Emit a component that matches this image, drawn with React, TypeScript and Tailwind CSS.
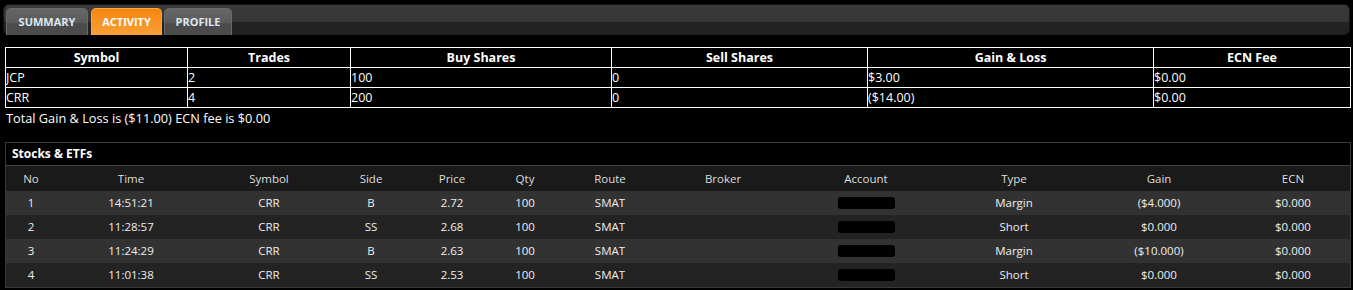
const summary = [
  { symbol: "JCP", trades: "2", buy: "100", sell: "0", gain: "$3.00", ecn: "$0.00" },
  { symbol: "CRR", trades: "4", buy: "200", sell: "0", gain: "($14.00)", ecn: "$0.00" },
];

const trades = [
  { no: "1", time: "14:51:21", symbol: "CRR", side: "B", price: "2.72", qty: "100", route: "SMAT", type: "Margin", gain: "($4.000)", ecn: "$0.000" },
  { no: "2", time: "11:28:57", symbol: "CRR", side: "SS", price: "2.68", qty: "100", route: "SMAT", type: "Short", gain: "$0.000", ecn: "$0.000" },
  { no: "3", time: "11:24:29", symbol: "CRR", side: "B", price: "2.63", qty: "100", route: "SMAT", type: "Margin", gain: "($10.000)", ecn: "$0.000" },
  { no: "4", time: "11:01:38", symbol: "CRR", side: "SS", price: "2.53", qty: "100", route: "SMAT", type: "Short", gain: "$0.000", ecn: "$0.000" },
];

const cols = "grid grid-cols-[50px_150px_126px_78px_84px_62px_108px_118px_168px_128px_162px_106px]";

const Tab = ({ label, active }: { label: string; active?: boolean }) => (
  <div
    className={
      active
        ? "h-[27px] px-[12px] flex items-center justify-center rounded-t-[5px] bg-gradient-to-b from-[#f5850a] to-[#f8a035] text-white text-[11px] font-bold border border-b-0 border-[#f9a845]"
        : "h-[27px] px-[12px] flex items-center justify-center rounded-t-[5px] bg-[linear-gradient(#666_0%,#5a5a5a_55%,#4a4a4a_56%,#4d4d4d_100%)] text-[#dce7ef] text-[11px] font-bold border border-b-0 border-[#6a6a6a]"
    }
  >
    {label}
  </div>
);

export default function App() {
  return (
    <div className="w-[1353px] h-[290px] overflow-hidden bg-black text-white font-['Open_Sans',sans-serif] pt-[4px]">
      <div className="mx-[3px] h-[31px] rounded-[6px] border border-b-0 border-[#151515] bg-[linear-gradient(#3a3a3a_0%,#353535_55%,#222_56%,#202020_100%)] flex items-end gap-[2px] pl-[2px]">
        <div className="w-[82px]"><Tab label="SUMMARY" /></div>
        <div className="w-[71px] ml-[1px]"><Tab label="ACTIVITY" active /></div>
        <div className="w-[68px]"><Tab label="PROFILE" /></div>
      </div>

      <table className="mt-[12px] ml-[5px] w-[1346px] table-fixed border-collapse text-[12.5px]">
        <colgroup>
          <col className="w-[182px]" />
          <col className="w-[163px]" />
          <col className="w-[261px]" />
          <col className="w-[256px]" />
          <col className="w-[286px]" />
          <col />
        </colgroup>
        <thead>
          <tr>
            {["Symbol", "Trades", "Buy Shares", "Sell Shares", "Gain & Loss", "ECN Fee"].map((h) => (
              <th key={h} className="border border-white h-[20px] p-0 leading-[18px] font-bold text-center">
                {h}
              </th>
            ))}
          </tr>
        </thead>
        <tbody>
          {summary.map((r) => (
            <tr key={r.symbol}>
              {[r.symbol, r.trades, r.buy, r.sell, r.gain, r.ecn].map((v, i) => (
                <td key={i} className="border border-white h-[20px] p-0 leading-[18px] text-left">
                  {v}
                </td>
              ))}
            </tr>
          ))}
        </tbody>
      </table>

      <div className="ml-[6px] mt-[1px] text-[12.75px] leading-[18px]">Total Gain &amp; Loss is ($11.00) ECN fee is $0.00</div>

      <div className="mt-[15px] ml-[5px] w-[1346px] border border-[#383838] text-[11.5px]">
        <div className="h-[23px] flex items-center px-[6px] font-bold text-[12px] border-b border-[#444] bg-black">
          Stocks &amp; ETFs
        </div>
        <div className={`${cols} h-[25px] items-center bg-[#1a1a1a] text-[#dedede] text-center`}>
          {["No", "Time", "Symbol", "Side", "Price", "Qty", "Route", "Broker", "Account", "Type", "Gain", "ECN"].map((h) => (
            <div key={h}>{h}</div>
          ))}
        </div>
        {trades.map((t, i) => (
          <div
            key={t.no}
            className={`${cols} h-[24px] items-center text-center text-[#eeeeee] font-medium ${i % 2 === 0 ? "bg-[#323232]" : "bg-[#232323]"}`}
          >
            <div>{t.no}</div>
            <div>{t.time}</div>
            <div>{t.symbol}</div>
            <div>{t.side}</div>
            <div>{t.price}</div>
            <div>{t.qty}</div>
            <div>{t.route}</div>
            <div></div>
            <div className="flex justify-center">
              <div className="w-[57px] h-[12px] bg-black rounded-[3px]" />
            </div>
            <div>{t.type}</div>
            <div>{t.gain}</div>
            <div>{t.ecn}</div>
          </div>
        ))}
      </div>
    </div>
  );
}
